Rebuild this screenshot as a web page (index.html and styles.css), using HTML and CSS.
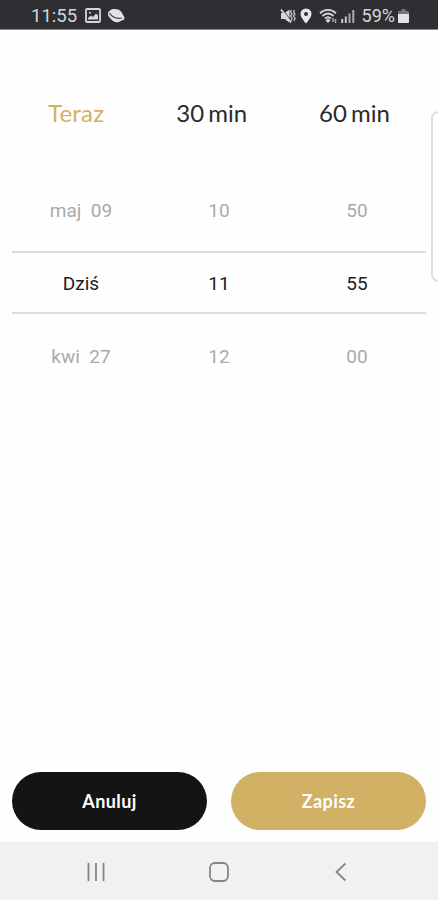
FILE: index.html
```html
<!DOCTYPE html>
<html lang="pl">
<head>
    <meta charset="UTF-8">
    <meta name="viewport" content="width=device-width, initial-scale=1.0">
    <title>Wybierz czas</title>
    <link rel="stylesheet" href="styles.css">
</head>
<body>
    <div class="screen">
        <header class="status-bar">
            <div class="status-left">
                <span class="clock">11:55</span>
                <svg class="icon-image" width="16" height="15" viewBox="0 0 16 15">
                    <rect x="1" y="1" width="14" height="13" rx="1" fill="none" stroke="#d6d7d9" stroke-width="1.800"/>
                    <path d="M3 11.500V10l3-2.500 2 1.500 3-3.500 2 2v4z" fill="#d6d7d9"/>
                    <circle cx="5" cy="4.800" r="1" fill="#d6d7d9"/>
                </svg>
                <svg class="icon-planet" width="18" height="16" viewBox="0 0 18 16">
                    <path d="M3 2.500C5.500.500 11 .500 14 3.500c1.500 1.500 1.700 3.500 3 5 1.500 2-.5 3.800-2.500 4C11 15.500 6 14.500 3.500 10.500 1 8-.5 4.500 3 2.500z" fill="#e2e3e4"/>
                    <path d="M2.500 5c2.500 4 7 6 12.500 5" fill="none" stroke="#3b3d41" stroke-width="1.200"/>
                </svg>
            </div>
            <div class="status-right">
                <svg width="17" height="16" viewBox="0 0 17 16">
                    <path d="M1 5h3.500L9.500 1.500v13L4.500 11H1z" fill="#d6d7d9"/>
                    <path d="M2.500 1.500l8.500 11" stroke="#2d2f33" stroke-width="1"/>
                    <path d="M1 1.500l10 13" stroke="#d6d7d9" stroke-width="1.700"/>
                    <path d="M11.500 2l-1 2 1.500 2-1.500 2 1.500 2-1 3M14.500 2l-1 2 1.500 2-1.500 2 1.500 2-1 3" fill="none" stroke="#c2c3c5" stroke-width="1.300"/>
                </svg>
                <svg class="icon-pin" width="12" height="16" viewBox="0 0 12 16">
                    <path d="M6 .500A5.500 5.500 0 0 0 .500 6C.500 9.500 6 15.500 6 15.500S11.500 9.500 11.500 6A5.500 5.500 0 0 0 6 .500zM6 4a2 2 0 1 1 0 4 2 2 0 0 1 0-4z" fill="#e6e7e8"/>
                </svg>
                <svg class="icon-wifi" width="19" height="16" viewBox="0 0 19 16">
                    <path d="M1 5.300C5.500.800 12.500.800 17 5.300M3.500 8c3.500-3.200 7.500-3.200 11 0M6 10.500c2-1.700 4-1.700 6 0" fill="none" stroke="#d6d7d9" stroke-width="1.800"/>
                    <path d="M9 10.500l2.500 2L9 15l-2.500-2.500z" fill="#d6d7d9"/>
                    <path d="M14 10v4M16.500 11v4" fill="none" stroke="#a9abad" stroke-width="1.500"/>
                </svg>
                <svg class="icon-signal" width="14" height="16" viewBox="0 0 14 16">
                    <path d="M1.200 11v4M4.800 8.500V15" stroke="#c6c7c9" stroke-width="2"/>
                    <path d="M8.500 5.500V15M12.300 2v13" stroke="#a8aaad" stroke-width="2"/>
                </svg>
                <span class="battery-level">59%</span>
                <svg class="icon-battery" width="11" height="14" viewBox="0 0 11 14">
                    <path d="M3.500 0h4v2H10a1 1 0 0 1 1 1v3H0V3a1 1 0 0 1 1-1h2.500z" fill="#75777a"/>
                    <path d="M0 5h11v8a1 1 0 0 1-1 1H1a1 1 0 0 1-1-1z" fill="#e2e3e4"/>
                </svg>
            </div>
        </header>

        <main class="content">
            <nav class="presets">
                <button class="preset active">Teraz</button>
                <button class="preset">30 min</button>
                <button class="preset">60 min</button>
            </nav>

            <div class="picker">
                <div class="picker-row"><span>maj&nbsp; 09</span><span>10</span><span>50</span></div>
                <div class="picker-row selected"><span>Dziś</span><span>11</span><span>55</span></div>
                <div class="picker-row"><span>kwi&nbsp; 27</span><span>12</span><span>00</span></div>
            </div>

            <div class="actions">
                <button class="button cancel">Anuluj</button>
                <button class="button save">Zapisz</button>
            </div>
        </main>

        <footer class="nav-bar">
            <svg width="20" height="20" viewBox="0 0 20 20">
                <path d="M2.500 1v18M10 1v18M17.500 1v18" stroke="#858585" stroke-width="1.800"/>
            </svg>
            <svg width="20" height="20" viewBox="0 0 20 20">
                <rect x="1" y="1" width="18" height="18" rx="5" fill="none" stroke="#858585" stroke-width="1.800"/>
            </svg>
            <svg width="20" height="20" viewBox="0 0 20 20">
                <path d="M14.500 1.500L5.500 10l9 8.500" fill="none" stroke="#858585" stroke-width="1.800"/>
            </svg>
        </footer>

        <!-- edge panel handle -->
        <div class="edge-panel"></div>
    </div>
</body>
</html>
```
FILE: styles.css
```css
* {
    margin: 0;
    padding: 0;
    box-sizing: border-box;
}

body {
    background: #fefefe;
    font-family: Roboto, sans-serif;
    color: #2b2b2b;
}

button {
    border: none;
    background: none;
    font-family: Lato, sans-serif;
}

svg {
    display: block;
    flex-shrink: 0;
}

.screen {
    position: relative;
    width: 438px;
    height: 900px;
    overflow: hidden;
    display: flex;
    flex-direction: column;
}

.status-bar {
    height: 30px;
    padding: 2px 29px 0 31px;
    display: flex;
    justify-content: space-between;
    align-items: center;
    background: #2d2f33;
    border-bottom: 1px solid #8b8c8e;
    color: #d6d7d9;
    font-size: 18px;
}

.status-left,
.status-right {
    display: flex;
    align-items: center;
}

.clock {
    width: 46px;
    margin-right: 8px;
    font-size: 18.5px;
}

.icon-planet {
    margin-left: 6px;
}

.icon-pin {
    margin-left: 3px;
}

.icon-wifi {
    margin-left: 7px;
}

.icon-signal {
    margin-left: 3px;
}

.battery-level {
    margin: 0 3px 0 7px;
}

.icon-battery {
    margin-top: 1px;
}

.content {
    flex: 1;
    display: flex;
    flex-direction: column;
    padding: 67px 12px 12px;
}

.presets {
    display: flex;
    justify-content: space-between;
    padding: 0 36px;
}

.preset {
    font-size: 24px;
    line-height: 32px;
    word-spacing: -2px;
    color: #2b2b2b;
}

.preset.active {
    letter-spacing: 0.2px;
    color: #d3b163;
}

.picker {
    margin-top: 51px;
}

.picker-row {
    display: grid;
    grid-template-columns: repeat(3, 1fr);
    height: 71px;
    align-items: center;
    padding-bottom: 10px;
    text-align: center;
    font-size: 19px;
    color: #aaa;
}

.picker-row.selected {
    height: 63px;
    padding: 1px 0 0;
    border-top: 2px solid #dcdcdc;
    border-bottom: 2px solid #dcdcdc;
    color: #1c1c1c;
}

.picker-row.selected + .picker-row {
    height: 85px;
    padding-bottom: 0;
}

.actions {
    display: flex;
    gap: 24px;
    margin-top: auto;
}

.button {
    flex: 1;
    height: 58px;
    border-radius: 29px;
    color: #fff;
    font-size: 18px;
    font-weight: 700;
    letter-spacing: 0.4px;
}

.cancel {
    background: #141414;
}

.save {
    background: #d1b164;
}

.nav-bar {
    height: 58px;
    padding: 2px 87px 0 86px;
    display: flex;
    justify-content: space-between;
    align-items: center;
    background: #f1f1f1;
}

.edge-panel {
    position: absolute;
    top: 111px;
    right: -8px;
    width: 15px;
    height: 171px;
    border: 2px solid #dedede;
    border-radius: 9px;
}
```
